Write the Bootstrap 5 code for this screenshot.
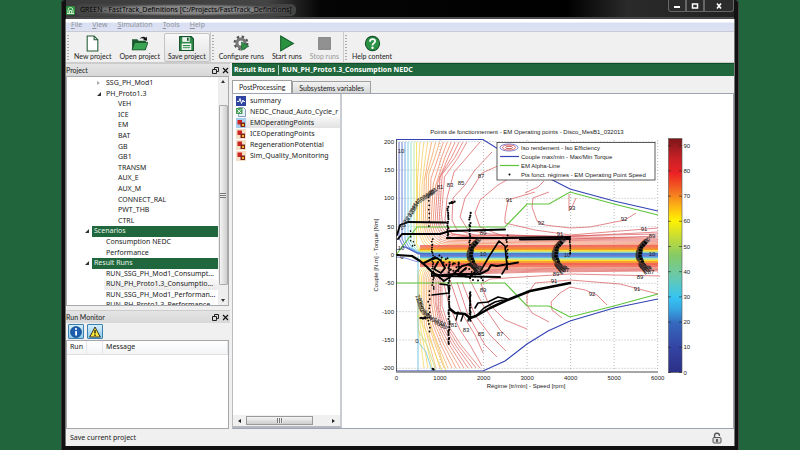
<!DOCTYPE html>
<html lang="en">
<head>
<meta charset="utf-8">
<meta name="viewport" content="width=device-width, initial-scale=1">
<title>GREEN - FastTrack_Definitions</title>
<link href="https://cdn.jsdelivr.net/npm/bootstrap@5.3.0/dist/css/bootstrap.min.css" rel="stylesheet">
<style>
:root{--green:#20673d;--face:#f0f0f0}
body{background:#21653d;font:7px/10px "Noto Sans",sans-serif;color:#222;padding:0 61px}
button,input{font:inherit;color:inherit}
.ui{font-family:Lato,sans-serif}
.frame{background:#111;min-height:100vh;padding:0 5px 4px;border-radius:4px 4px 0 0;box-shadow:inset 1px 0 #333,inset -1px 0 #444}
.client{background:var(--face);box-shadow:-1px 0 #777,1px 0 #777}
.titlebar{height:19px;border-bottom:2px solid #4a4a4a;background:linear-gradient(90deg,#3b3b3b,#444 30%,#050505 38%,#000 75%,#2a2a2a 84%,#222)}
.titlebar .caption{color:#000;background:radial-gradient(closest-side,#858585 60%,#444);padding:0 4px;margin-left:-3px;border-radius:5px;line-height:12px}
.winbtn{height:12px;border:1px solid #666;border-top:0;background:#2c2c2c;padding:0;width:18px;line-height:0}
.winbtn:last-child{width:30px;border-radius:0 0 3px 0}
.winbtn:first-child{border-radius:0 0 0 3px}
.menus{height:13px;background:linear-gradient(#fff 25%,#d9dff2 35%,#dde3f4);border-bottom:1px solid #c8cbd4;padding-left:5px;gap:10px}
.menus a{color:#8f939c;text-decoration:none}
.menus a::first-letter{text-decoration:underline}
.tools{height:31px;border-bottom:1px solid #ccc}
.grip{width:4px;height:27px;margin-top:2px;background:radial-gradient(circle,#aaa 1px,transparent 1px) 0 0/4px 3px}
.tool{border:1px solid transparent;background:none;border-radius:2px;padding:1px 3px 0;height:29px;margin-top:1px;white-space:nowrap;line-height:9px}
.tool svg{display:block;margin:0 auto;width:17px;height:17px}
.tool.hot{border-color:#c4c4c4;background:linear-gradient(#f8f8f8,#e3e3e3)}
.tool:disabled{color:#999}
.rule{width:1px;background:#ccc}
.leftdock{width:164px}
.dockhead{height:13px;background:linear-gradient(#e4e4e4,#d8d8d8);border-top:1px solid #ccc}
.dockhead button{border:0;background:none;padding:0;width:10px;line-height:0}
.treebox{height:230px;background:#fff;border:1px solid #a5a9ae;overflow:hidden;margin-right:1px}
.tree{height:233px;margin:1px 0 0;padding:0;list-style:none}
.tree li{flex:1 1 0;min-height:0;position:relative;white-space:nowrap;padding-left:39px}
.tree .leaf{padding-left:51px}
.tree .head span{background:var(--green);color:#e8f5ea;margin-left:-14px;padding-left:2px;flex:1}
.tree .hov span{background:linear-gradient(#fafafa,#e9e9e9);border-radius:2px;margin-left:-2px;padding-left:2px;flex:1}
.tree i{position:absolute;left:30px;top:3px;width:0;height:0;border-left:4px solid transparent;border-bottom:4px solid #333}
.tree .head i{left:18px}
.tree i.shut{border:2px solid transparent;border-left:3px solid #aaa}
.vbar{width:10px;background:#eee;padding:2px 0}
.vbar .thumb{border:1px solid #aaa;background:linear-gradient(90deg,#f4f4f4,#cfcfcf);border-radius:1px;width:9px;height:180px;margin-top:20px}
.arr{border:0;background:none;padding:0;line-height:0}
.grid3{width:6px;height:5px;background:repeating-linear-gradient(#777 0 1px,#eee 1px 2px)}
.grid3.v{background:repeating-linear-gradient(90deg,#777 0 1px,#eee 1px 2px)}
.filters{gap:3px;padding:1px 2px}
.filter{width:16px;height:15px;padding:0;border:1px solid #3c7fb1;background:linear-gradient(#d5effc,#8cc8e8);border-radius:1px;line-height:0}
.msgbox{background:#fff;border:1px solid #a5a9ae;margin-right:1px}
.msgs{width:100%}
.msgs th{font-weight:400;height:13px;padding:0 3px;background:linear-gradient(#fff,#f3f4f6);border-right:1px solid #e5e6e8;border-bottom:1px solid #e0e0e0}
.work{margin-left:2px}
.greenbar{height:13px;background:var(--green);color:#fff;font-weight:700;border-top:1px solid #0f4d28}
.greenbar span{padding:0 3px 0 2px}
.greenbar span+span{border-left:1px solid #b8d3c1;padding-left:3px}
.pages{height:13px}
.pages button{border:1px solid #a0a0a0;border-bottom:0;padding:0 6px;background:linear-gradient(#f2f2f2,#d8d8d8);height:12px;margin-top:1px}
.pages button.on{background:#fff;height:13px;margin-top:0}
.panes{background:#fff;border:1px solid #9da3b0;border-left-color:#bbb}
.files{width:109px;border-right:2px solid #c9ccd2;border-bottom:2px solid #b5b9c1;overflow:hidden}
.files ul{list-style:none;margin:1px 0 0;padding:0 0 0 3px}
.files li{height:11px;white-space:nowrap}
.files li span{padding-left:4px}
.files li.sel{background:linear-gradient(#f7f7f7,#e2e2e2)}
.files li svg{flex:none;width:10px;height:10px}
.hbar{height:11px;background:#f0f0f0;padding:1px 4px}
.hbar .thumb{width:67px;height:9px;border:1px solid #999;background:linear-gradient(#f5f5f5,#cdcdcd)}
.status{height:17px;padding:0 12px 0 4px}
.plot{font-family:"Liberation Sans",sans-serif;font-size:6px;display:block;width:100%;fill:#222}
.plot polyline,.plot path{fill:none}
</style>
<script src="https://cdn.jsdelivr.net/npm/bootstrap@5.3.0/dist/js/bootstrap.bundle.min.js"></script>
</head>
<body>
<div class="frame d-flex flex-column">
 <header class="titlebar d-flex align-items-start">
  <div class="d-flex align-items-center gap-1 pt-1">
   <svg width="9" height="9" viewBox="0 0 9 9"><rect width="9" height="9" rx="1" fill="#2c8d3e"/><path d="M2 7V4a2.500 2.500 0 0 1 5 0v3M3.500 7V4.500h2V7M1 7.500h7" fill="none" stroke="#c8eec8"/></svg>
   <span class="caption">GREEN - FastTrack_Definitions [C:/Projects/FastTrack_Definitions]</span>
  </div>
  <div class="ms-auto d-flex">
   <button class="winbtn" aria-label="Minimize"><svg width="8" height="6"><rect x="1" y="3" width="6" height="2" fill="#fff"/></svg></button>
   <button class="winbtn" aria-label="Maximize"><svg width="8" height="6"><rect x="1.500" y="1" width="5" height="4" fill="none" stroke="#fff" stroke-width="1.500"/></svg></button>
   <button class="winbtn" aria-label="Close"><svg width="8" height="6"><path d="M2 0.500l4 5M6 0.500l-4 5" stroke="#fff" stroke-width="1.600"/></svg></button>
  </div>
 </header>
 <div class="client flex-fill d-flex flex-column">
  <nav class="menus d-flex align-items-center">
   <a class="d-block" href="#">File</a><a class="d-block" href="#">View</a><a class="d-block" href="#">Simulation</a><a class="d-block" href="#">Tools</a><a class="d-block" href="#">Help</a>
  </nav>
  <div class="tools ui d-flex">
   <div class="grip"></div>
   <button class="tool"><svg viewBox="0 0 16 16"><path d="M3 1h6.500l3.500 3.500V15H3z" fill="#fff" stroke="#235b35"/><path d="M9.500 1v3.500H13" fill="none" stroke="#235b35"/></svg>New project</button>
   <button class="tool"><svg viewBox="0 0 16 16"><path d="M1 14V4h5l1 1.500h7V14z" fill="#1c5b30"/><path d="M1 14l2.500-7H16l-2.500 7z" fill="#3ba354" stroke="#124824" stroke-width=".7"/><path d="M8 3.500q3-3 6-1l.8-1.200.4 4-4-.6 1.400-1q-2.200-1-4.600-.2z" fill="#111"/></svg>Open project</button>
   <button class="tool hot"><svg viewBox="0 0 16 16"><path d="M1.500 1.500h11l2 2v11h-13z" fill="#2e8a48" stroke="#14502a"/><rect x="4" y="2" width="7" height="4.500" fill="#e9f3ea"/><rect x="8.500" y="2.500" width="1.500" height="3" fill="#14502a"/><rect x="3.500" y="8" width="9" height="6" fill="#fff"/><path d="M4.500 10h7M4.500 12h7" stroke="#2e8a48"/></svg>Save project</button>
   <div class="rule"></div><div class="grip"></div>
   <button class="tool"><svg viewBox="0 0 16 16"><circle cx="7.500" cy="7.500" r="5.800" fill="none" stroke="#555" stroke-width="2.400" stroke-dasharray="2.200 2.350"/><circle cx="7.500" cy="7.500" r="3.800" fill="none" stroke="#777" stroke-width="2.800"/><path d="M8 6.500l7 4-7 4z" fill="#2f8f46" stroke="#14502a" stroke-width=".5"/></svg>Configure runs</button>
   <button class="tool"><svg viewBox="0 0 16 16"><path d="M2.500 1l12 7-12 7z" fill="#2a9140" stroke="#14602a"/></svg>Start runs</button>
   <button class="tool" disabled><svg viewBox="0 0 16 16"><rect x="2.500" y="2.500" width="11" height="11" fill="#919191" stroke="#858585"/></svg>Stop runs</button>
   <div class="rule"></div><div class="grip"></div>
   <button class="tool"><svg viewBox="0 0 16 16"><circle cx="8" cy="8" r="6.700" fill="#2b9245" stroke="#14502a"/><path d="M5.600 6.400q0-2.500 2.400-2.500t2.400 2q0 1.200-1.200 1.900T8 9.800" fill="none" stroke="#fff" stroke-width="1.700"/><circle cx="8" cy="12" r="1.100" fill="#fff"/></svg>Help content</button>
  </div>
  <main class="flex-fill d-flex">
   <aside class="leftdock d-flex flex-column">
    <div class="dockhead ui d-flex align-items-center"><span>Project</span>
     <button class="ms-auto" aria-label="Float"><svg width="7" height="7"><path d="M2.500 2.500v-2h4v4h-2M.5 2.500h4v4h-4z" fill="none" stroke="#222"/></svg></button><button aria-label="Close panel"><svg width="7" height="7"><path d="M1 1l5 5M6 1l-5 5" stroke="#111" stroke-width="1.200"/></svg></button></div>
    <div class="treebox d-flex">
     <ul class="tree flex-fill d-flex flex-column">
      <li><i class="shut"></i>SSG_PH_Mod1</li><li><i></i>PH_Proto1.3</li>
      <li class="leaf">VEH</li><li class="leaf">ICE</li><li class="leaf">EM</li><li class="leaf">BAT</li><li class="leaf">GB</li><li class="leaf">GB1</li><li class="leaf">TRANSM</li><li class="leaf">AUX_E</li><li class="leaf">AUX_M</li><li class="leaf">CONNECT_RAL</li><li class="leaf">PWT_THB</li><li class="leaf">CTRL</li>
      <li class="head d-flex"><i></i><span>Scenarios</span></li><li>Consumption NEDC</li><li>Performance</li>
      <li class="head d-flex"><i></i><span>Result Runs</span></li><li>RUN_SSG_PH_Mod1_Consumpt...</li><li class="hov d-flex"><span>RUN_PH_Proto1.3_Consumptio...</span></li><li>RUN_SSG_PH_Mod1_Performan...</li><li>RUN_PH_Proto1.3_Performance</li>
     </ul>
     <div class="vbar d-flex flex-column align-items-center">
      <button class="arr" aria-label="Scroll up"><svg width="6" height="6"><path d="M1 4l2-3 2 3z" fill="#333"/></svg></button>
      <div class="thumb d-flex align-items-center justify-content-center"><div class="grid3"></div></div>
      <button class="arr mt-auto" aria-label="Scroll down"><svg width="6" height="6"><path d="M1 2l2 3 2-3z" fill="#333"/></svg></button>
     </div>
    </div>
    <div class="dockhead ui d-flex align-items-center mt-1"><span>Run Monitor</span>
     <button class="ms-auto" aria-label="Float"><svg width="7" height="7"><path d="M2.500 2.500v-2h4v4h-2M.5 2.500h4v4h-4z" fill="none" stroke="#222"/></svg></button><button aria-label="Close panel"><svg width="7" height="7"><path d="M1 1l5 5M6 1l-5 5" stroke="#111" stroke-width="1.200"/></svg></button></div>
    <div class="filters d-flex">
     <button class="filter" aria-label="Information"><svg width="12" height="12"><circle cx="6" cy="6" r="5.500" fill="#1b5fae" stroke="#0c3a75" stroke-width=".6"/><rect x="5.200" y="5" width="1.800" height="4.500" fill="#fff"/><circle cx="6" cy="3" r="1.100" fill="#fff"/></svg></button>
     <button class="filter" aria-label="Warnings"><svg width="12" height="12"><path d="M6 1l5.300 10H.7z" fill="#fbe43a" stroke="#222" stroke-width=".9" stroke-linejoin="round"/><path d="M6 4v3.500M6 8.600v1.400" stroke="#111" stroke-width="1.300"/></svg></button>
    </div>
    <div class="msgbox flex-fill">
     <table class="msgs"><thead><tr><th style="width:12%">Run</th><th style="width:10%" aria-label="State"></th><th>Message</th></tr></thead></table>
    </div>
   </aside>
   <section class="work flex-fill d-flex flex-column">
    <div class="greenbar d-flex align-items-center"><span>Result Runs</span><span>RUN_PH_Proto1.3_Consumption NEDC</span></div>
    <div class="pages ui d-flex mt-1"><button class="on">PostProcessing</button><button>Subsystems variables</button></div>
    <div class="panes flex-fill d-flex">
     <div class="files flex-shrink-0 d-flex flex-column">
      <ul>
       <li class="d-flex align-items-center"><svg viewBox="0 0 10 10"><rect width="10" height="10" fill="#2f43a0"/><path d="M1 5.500h2l1-3 1.500 5L7 4l.6 1.500H9" fill="none" stroke="#fff"/></svg><span>summary</span></li>
       <li class="d-flex align-items-center"><svg viewBox="0 0 10 10"><path d="M2.500.5h5l2 2v7h-7z" fill="#e8f2fa" stroke="#6b87a8" stroke-width=".8"/><rect y="1" width="6.500" height="6" fill="#47a05a"/><path d="M1.500 2.500l3.500 3.500M5 2.500L1.500 6" stroke="#fff"/></svg><span>NEDC_Chaud_Auto_Cycle_r</span></li>
       <li class="d-flex align-items-center sel"><svg viewBox="0 0 10 10"><rect width="10" height="10" fill="#a7cdec"/><rect x="1.500" y="2" width="4.500" height="4.500" fill="#c22"/><rect x="4.500" y="4.500" width="4.500" height="4.500" fill="#7c2415"/><rect x="6" y="6" width="2" height="2" fill="#f6b42a"/></svg><span>EMOperatingPoints</span></li>
       <li class="d-flex align-items-center"><svg viewBox="0 0 10 10"><rect width="10" height="10" fill="#f3dfc6"/><rect x="1.500" y="1.500" width="4.500" height="4.500" fill="#c22"/><rect x="4.500" y="4.500" width="4.500" height="4.500" fill="#7c2415"/><rect x="6" y="6" width="2" height="2" fill="#f6b42a"/></svg><span>ICEOperatingPoints</span></li>
       <li class="d-flex align-items-center"><svg viewBox="0 0 10 10"><rect width="10" height="10" fill="#f3dfc6"/><rect x="1.500" y="1.500" width="4.500" height="4.500" fill="#c22"/><rect x="4.500" y="4.500" width="4.500" height="4.500" fill="#7c2415"/><rect x="6" y="6" width="2" height="2" fill="#f6b42a"/></svg><span>RegenerationPotential</span></li>
       <li class="d-flex align-items-center"><svg viewBox="0 0 10 10"><rect width="10" height="10" fill="#f3dfc6"/><rect x="1.500" y="1.500" width="4.500" height="4.500" fill="#c22"/><rect x="4.500" y="4.500" width="4.500" height="4.500" fill="#7c2415"/><rect x="6" y="6" width="2" height="2" fill="#f6b42a"/></svg><span>Sim_Quality_Monitoring</span></li>
      </ul>
      <div class="hbar mt-auto d-flex align-items-center gap-1">
       <button class="arr" aria-label="Scroll left"><svg width="5" height="6"><path d="M4 1v4L1 3z" fill="#222"/></svg></button>
       <div class="thumb d-flex align-items-center justify-content-center"><div class="grid3 v"></div></div>
       <button class="arr ms-auto" aria-label="Scroll right"><svg width="5" height="6"><path d="M1 1v4l3-2z" fill="#222"/></svg></button>
      </div>
     </div>
     <div class="flex-fill"><svg class="plot" id="plot" viewBox="342 94 391 330" role="img" aria-label="EM operating points chart"></svg></div>
    </div>
   </section>
  </main>
  <footer class="status d-flex align-items-center"><span>Save current project</span>
   <svg class="ms-auto" width="10" height="12"><path d="M2.500 5.500V4a2.500 2.500 0 0 1 5-.500v.500" fill="none" stroke="#555" stroke-width="1.300"/><rect x="1" y="5.500" width="8" height="5.500" rx="1" fill="#ddd" stroke="#555"/><path d="M5 7v3" stroke="#333" stroke-width="1.500"/></svg>
  </footer>
 </div>
</div>
<script>
const out=[];
const line=(pts,c,w=0.8,extra='')=>out.push(`<polyline points="${pts}" stroke="${c}" stroke-width="${w}" ${extra}/>`);
const label=(x,y,s,a='middle',rot=0)=>out.push(`<text x="${x}" y="${y}" text-anchor="${a}"${rot?` transform="rotate(${rot} ${x} ${y})"`:''}>${s}</text>`);
const RED='#d9565a', BLUE='#3344b5', LIME='#5cc43a';
let seed=7; const rnd=()=>(seed=(seed*16807)%2147483647)/2147483647;
const X=s=>396.5+s*0.04353, Y=t=>255-t*0.5665;
// dotted grid
for(let s=0;s<=6000;s+=1000) line(`${X(s)},140 ${X(s)},371`,'#888',0.6,'stroke-dasharray="1 2"');
for(let t=-200;t<=200;t+=50) line(`396.5,${Y(t)} 658,${Y(t)}`,'#888',0.6,'stroke-dasharray="1 2"');
// low-efficiency contours, upper left
[['#3a48b8',399],['#4060c8',402],['#4a9ade',405],['#5cc3e6',408],['#7fd8d0',411],['#b5e08a',414],['#f3e04a',416.5]].forEach(([c,x],i)=>
  line(`${x},142 ${x},${238+i} ${x+4},${246+i*.6} 418,${254-i*.7} 658,${254-i*.8}`,c));
// orange to red fan, upper half
for(let i=0;i<13;i++){
  const k=i/12,b=417.5+k*24,h=251-k*16,c=i<3?'#f9c74a':i<6?'#f49a4a':i<9?'#ee7a50':'#e2615a';
  const t=420+i*3.9;
  out.push(`<path d="M${t} 142L${b+(t-b)*.65} ${155+k*3}L${b+3*k} ${180+6*Math.sin(i)}L${b} 215Q${b} ${h} ${b+20} ${h}L520 ${h+1}L658 ${h+k*3}" stroke="${c}" stroke-width=".7"/>`);
}
['480,142 462,163 454,172 447,198 445,220 452,234 480,238 570,239 658,236',
 '492,152 475,170 465,185 453,198 452,220 457,230 475,235 560,236 658,234',
 '500,165 482,173 471,190 465,198 460,217 468,230 490,234 560,237 658,232',
 '510,178 498,185 480,200 475,213 480,227 505,237 560,238',
 '535,192 508,200 505,217 505,223 535,230 570,235 620,231 658,228',
 '549,192 533,198 532,207 537,221 545,225 570,228 590,227 625,220 636,213',
 '544,181 538,187 525,193','569,194 569,211 572,207 576,198'].forEach(p=>line(p,RED,0.7));
// lower half: fan descending from the bands
for(let i=0;i<15;i++){
  const k=i/14,b=418+k*24,h=260+k*13,c=i<3?'#f9d14a':i<7?'#f5a95a':i<10?'#ee8458':'#de6560';
  const e=424+i*4;
  out.push(`<path d="M658 ${h-k*2}L540 ${h-k}L${b+26} ${h+1}Q${b+1} ${h+1} ${b} ${276+k*6}L${b} ${305+4*Math.cos(i)}L${b+6*k} ${325}L${b+(e-b)*.5} 345L${e} 368" stroke="${c}" stroke-width=".7"/>`);
}
['443,280 449,305 460,330 470,345 482,366','450,280 460,310 475,335 483,353','457,282 468,315 485,345 497,357',
 '462,282 475,315 490,335 506,351','470,280 483,305 500,330 510,340','660,276 570,274 490,279 481,284 488,303 505,320 527,329',
 '658,294 620,284 570,280 535,283 527,295 527,305 532,313 549,322','607,305 597,295 585,290 570,287 560,293 551,302 552,310 562,318'].forEach(p=>line(p,RED,0.7));
line('418,256 418,371','#5ab8d8');line('418,342 426,352 432,371','#6cc5dc');line('418,330 427,345 436,371','#b8dc7c');line('418,315 428,335 442,371','#f0dd60');line('418,296 430,325 446,371','#f5cf55');
// central bands
[[246,'#f2564c'],[248,'#ee6a2c'],[249.500,'#f59a20'],[251,'#ffe23a'],[252.500,'#8ad8c4'],[254,'#3d70cf'],[256,'#3d54c0'],[257.500,'#59c0ea'],[259,'#a9dd90'],[260.500,'#ffdf30'],[262,'#f78f1e'],[264,'#f0483c'],[266,'#f06a60']].forEach(([y,c])=>line(`420,${y} 658,${y}`,c,1.3));
line('396,250 405,247 418,253 430,254','#4a5fd0');line('396,257 405,258 418,262','#6c7ce0');
// torque limits and alpha line
line('396,139.500 483,139.500 527,167 570,189 614,201 658,211',BLUE,1.2);
line('396,371 483,371 505,361 527,344 548,331 570,321 614,308 658,299',BLUE,1.2);
line('396,255 417,227 505,227 527,204 549,204 570,192 614,204 658,215',LIME,1.1);
line('396,283 505,283 527,306 549,306 570,317 614,306 658,294',LIME,1.1);
// operating points
const dots=(pts,n,j,r=1.1)=>{for(let i=0;i<pts.length-1;i++){for(let q=0;q<n;q++){const f=q/n,x=pts[i][0]+(pts[i+1][0]-pts[i][0])*f+(rnd()-.5)*j,y=pts[i][1]+(pts[i+1][1]-pts[i][1])*f+(rnd()-.5)*j;out.push(`<circle cx="${x.toFixed(1)}" cy="${y.toFixed(1)}" r="${r}" fill="#000"/>`)}}};
const trail=(p,w=2)=>line(p,'#000',w,'stroke-linejoin="round" stroke-linecap="round"');
trail('397,235 400,225 408,222 446,222.500',1.8);trail('398,239 402,234 440,234 450,231 505,229.500',2);
trail('447,238 505,238 570,237',2.200);trail('520,239.500 570,239',2.200);
trail('397,255 412,256 420,261 427,267 434,274 442,276 500,277',2.200);
trail('424,263 432,259 437,258 441,261 445,268 441,273 434,269 438,262');
trail('434,273 444,281 450,277 462,266 470,264 476,271 470,277 458,275 466,268');
trail('432,276 455,274 480,274 488,270 491,265 497,266 518,262.500');
trail('480,272 490,255 499,241 505,246 507,266 502,274',1.6);
trail('440,284 448,285 449,293 432,295',1.6);trail('450,309 455,313 465,314 470,318 476,316 490,308 510,299 530,291 550,287 570,283',2.500);
trail('476,316 484,308 495,302 507,299 498,297 488,302 478,303 475,308',1.6);
trail('458,312 456,320M465,314'.split('M')[0],1.400);trail('463,315 461,321',1.400);trail('469,317 468,321',1.400);
dots([[429,197],[429,230]],8,1,0.9);dots([[429,292],[429,334]],13,2,0.9);dots([[433,369],[434,370]],3,1,1);dots([[432,240],[433,290]],26,2,0.9);
dots([[448,207],[448,240]],16,1);dots([[450,203],[455,202]],6,1);dots([[449,262],[449,346]],40,1.2);
dots([[470,213],[470,250]],16,1.5);dots([[470,292],[470,322]],22,1);dots([[409,232],[412,247],[415,238]],3,4,.8);
dots([[507,236],[507,272]],16,1.5,.9);dots([[570,239],[570,256]],9,.8,.9);dots([[420,318],[428,318]],8,1);
dots([[440,260],[480,277]],40,12,1);
// crowded contour labels
const stack=(pts,n,rot)=>{for(let i=0;i<n;i++){const f=i/(n-1)*(pts.length-1),a=Math.min(pts.length-2,Math.floor(f)),g=f-a;
  label((pts[a][0]+(pts[a+1][0]-pts[a][0])*g).toFixed(1),(pts[a][1]+(pts[a+1][1]-pts[a][1])*g+2).toFixed(1),20+i*3,'middle',rot)}};
stack([[404,226],[413,212],[418,202],[430,194],[436,190]],18,-50);
stack([[417,297],[420,309],[430,318],[443,325]],14,60);
for(const x of [0,85,169]) stack([[479+x,240],[472+x,247],[471+x,256],[474+x,265],[480+x,270]],30,-35);
for(const x of [0,85,169]) line(`${477+x},242 ${472+x},248 ${471+x},256 ${474+x},264`,'#000',3.5,'stroke-dasharray="2 1"');
label(401,153,10);label(401,250,10);label(402,259,0);label(483,256,10);label(567,257,10);label(652,256,10);
[[440,189,81],[450,187,83],[461,185,85],[481,178,87],[483,235,89],[509,202,91],[541,225,92],[572,210,93],[624,221,92],[560,236,91],[644,231,91],[652,238,89],
 [454,327,81],[466,332,83],[481,336,85],[500,336,87],[483,292,89],[554,283,91],[592,296,92],[637,291,91],[556,276,89],[640,279,89],[566,272,87],[651,274,87],[417,343,0]].forEach(a=>label(a[0],a[1],a[2]));
// axes
line('396.500,140 396.500,371','#333',0.8);line('396,372 658,372','#888',1.4);
for(let s=0;s<=6000;s+=1000) label(X(s),380,s);
for(let t=-200;t<=200;t+=50) label(394,Y(t)+2,t,'end');
label(527,134,'Points de fonctionnement - EM Operating points - Disco_MesB1_032013');
label(526,388,'Régime [tr/min] - Speed [rpm]');
label(378,255,'Couple [N.m] - Torque [Nm]','middle',-90);
// legend
out.push('<rect x="497" y="142.500" width="158" height="37.500" fill="#fff" stroke="#333" stroke-width=".8"/><g fill="none" stroke-width=".8"><ellipse cx="509" cy="147.500" rx="9" ry="3.500" stroke="#5a62c8"/><ellipse cx="509" cy="147.500" rx="6.500" ry="2.500" stroke="#e05050"/><ellipse cx="509" cy="147.500" rx="3.500" ry="1.200" stroke="#b03030"/></g>');
line('500,156.500 519,156.500',BLUE,1.2);line('500,165.500 519,165.500',LIME,1.2);
out.push('<circle cx="509.500" cy="174.500" r="1" fill="#000"/>');
['Iso rendement - Iso Efficiency','Couple max/min - Max/Min Torque','EM Alpha-Line','Pts fonct. régimes - EM Operating Point Speed'].forEach((s,i)=>label(521,149.500+9*i,s,'start'));
// colour scale
out.push('<defs><linearGradient id="jet" x1="0" y1="1" x2="0" y2="0">'+[[0,'#2b2f85'],[.11,'#3445a4'],[.21,'#3568bd'],[.27,'#36a5e2'],[.32,'#35c4f2'],[.4,'#64c9b4'],[.5,'#86ca66'],[.58,'#c8dc35'],[.65,'#fff200'],[.71,'#fdb515'],[.77,'#f37321'],[.85,'#ed2224'],[.92,'#c42026'],[1,'#7b1618']].map(a=>`<stop offset="${a[0]}" stop-color="${a[1]}"/>`).join('')+'</linearGradient></defs><rect x="668.500" y="138.500" width="13.500" height="234" fill="url(#jet)" stroke="#555" stroke-width=".6"/>');
for(let v=0;v<=90;v+=10){const y=372.500-v*2.52;line(`668,${y} 671,${y}`,'#222',.6);line(`679,${y} 682,${y}`,'#222',.6);label(683.500,y+2,v,'start')}
document.getElementById('plot').innerHTML=out.join('');
</script>
</body>
</html>
